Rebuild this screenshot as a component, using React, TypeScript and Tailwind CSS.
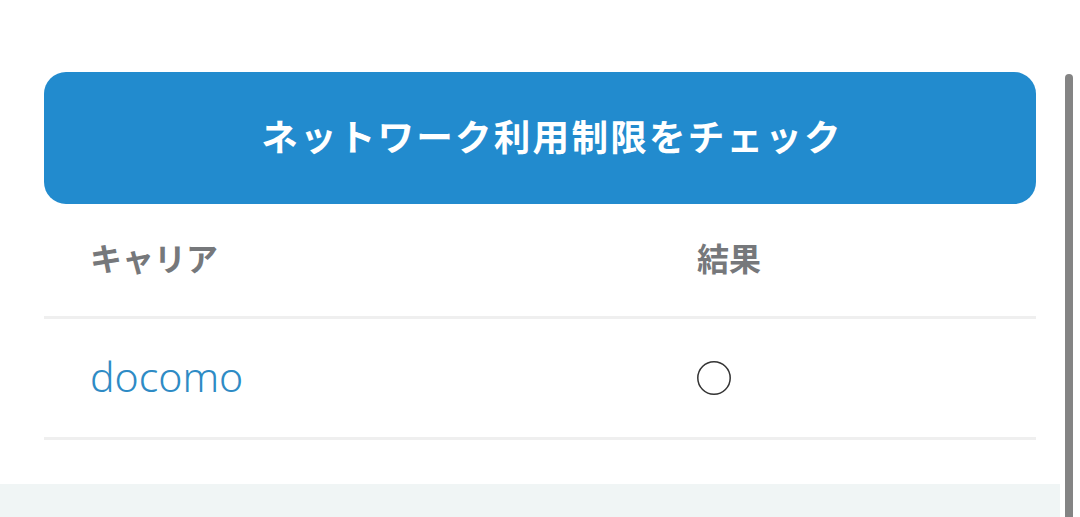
const JP = "font-['Noto_Sans_CJK_JP','Noto_Sans',sans-serif]";

function Maru() {
  return (
    <svg width="36" height="36" viewBox="0 0 36 36" aria-label="○">
      <circle cx="18" cy="18" r="16.2" fill="none" stroke="#333" strokeWidth="1.5" />
    </svg>
  );
}

export default function App() {
  return (
    <div className={"relative flex h-[517px] w-full overflow-hidden bg-white " + JP}>
      <div className="flex w-[1060px] flex-col">
        <div className="pl-[44px] pr-[24px] pt-[72px]">
          <button className="flex h-[132px] w-full items-center justify-center rounded-[22px] bg-[#228bce] pb-[4px] pl-[24px] text-[36.6px] font-bold tracking-[0.06em] text-white">
            ネットワーク利用制限をチェック
          </button>

          <div className="grid grid-cols-[607px_1fr]">
            <div className="flex h-[115px] items-center border-b-[3px] border-[#efefef] pb-[6px] pl-[46px] text-[32px] font-bold text-[#76787b]">
              キャリア
            </div>
            <div className="flex h-[115px] items-center border-b-[3px] border-[#efefef] pb-[6px] pl-[46px] text-[32px] font-bold text-[#76787b]">
              結果
            </div>
            <div className="flex h-[121px] items-center border-b-[3px] border-[#efefef] pb-[2px] pl-[46px] font-['Noto_Sans',sans-serif] text-[41px] font-light text-[#2e8bc5]">
              docomo
            </div>
            <div className="flex h-[121px] items-center border-b-[3px] border-[#efefef] pl-[45px]">
              <Maru />
            </div>
          </div>
        </div>
        <div className="mt-auto h-[33px] bg-[#f0f5f5]" />
      </div>
      <div className="flex w-[20px] justify-center pt-[74px]">
        <div className="ml-[-2px] h-full w-[8px] rounded-t-full bg-[#848484]" />
      </div>
    </div>
  );
}
